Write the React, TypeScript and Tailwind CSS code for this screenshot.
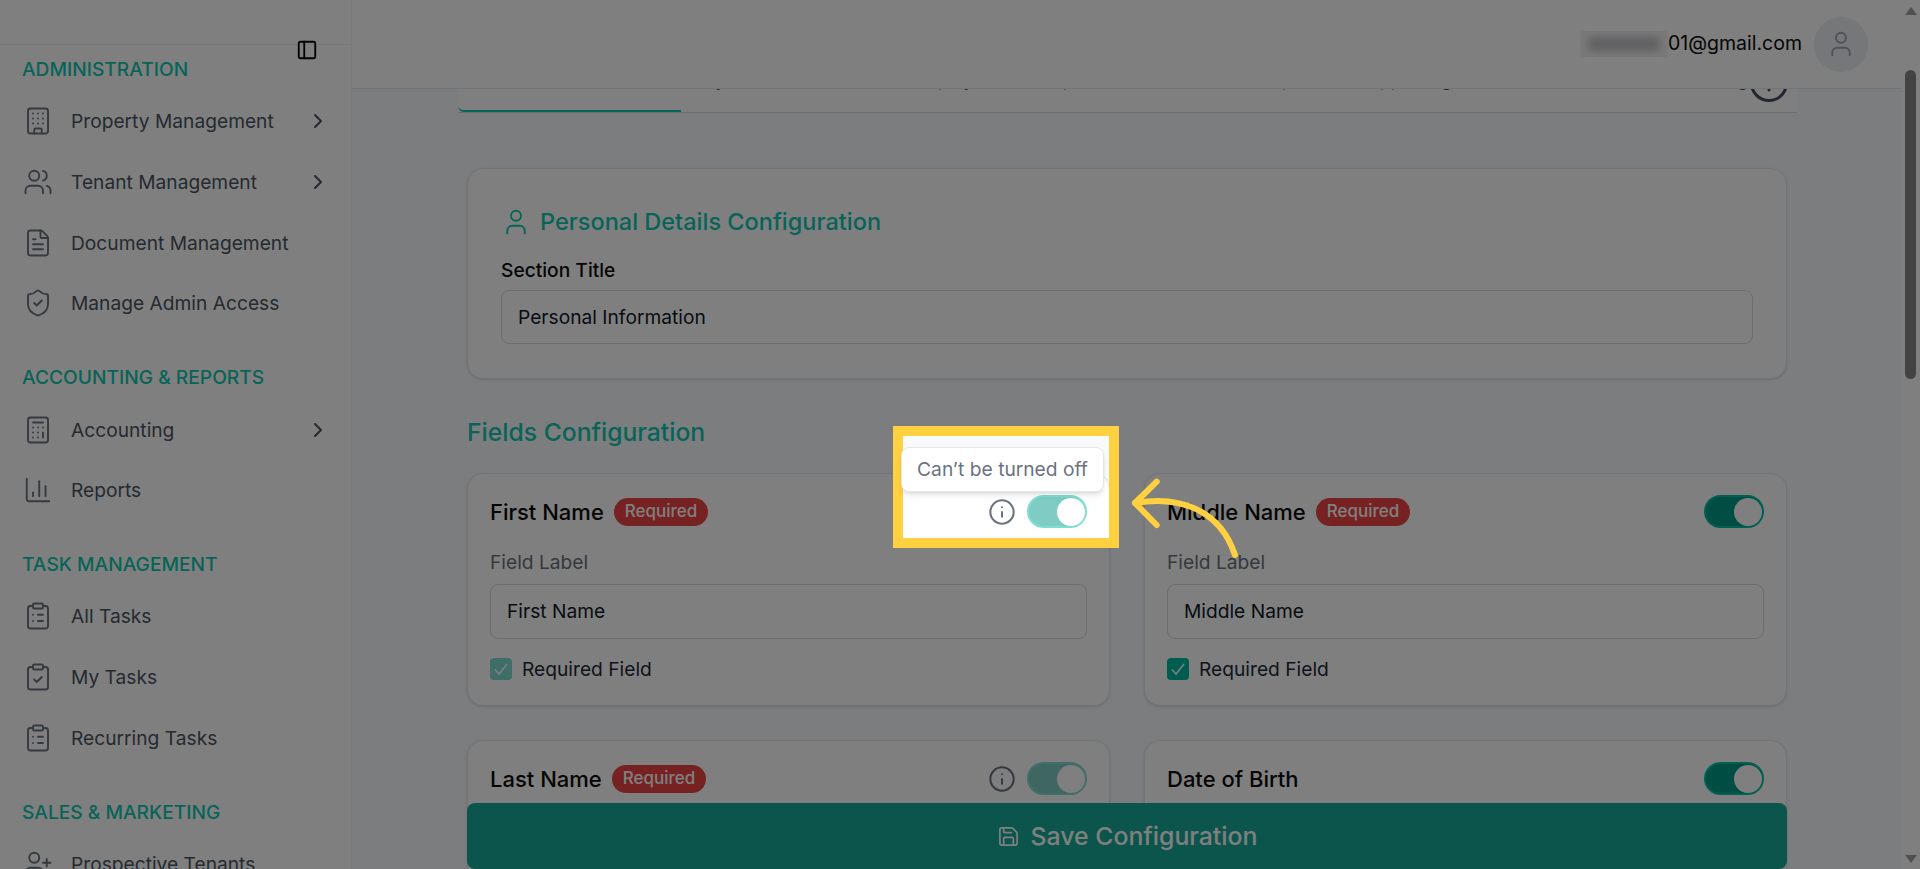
import {
  Briefcase,
  Building,
  Calculator,
  ChartColumn,
  ChevronRight,
  ClipboardCheck,
  ClipboardList,
  FileText,
  Info,
  PanelLeft,
  Save,
  ShieldCheck,
  User,
  UserPlus,
  Users,
} from 'lucide-react'

const NAV = [
  {
    title: 'Administration',
    items: [
      { label: 'Property Management', icon: Building, more: true },
      { label: 'Tenant Management', icon: Users, more: true },
      { label: 'Document Management', icon: FileText },
      { label: 'Manage Admin Access', icon: ShieldCheck },
    ],
  },
  {
    title: 'Accounting & Reports',
    items: [
      { label: 'Accounting', icon: Calculator, more: true },
      { label: 'Reports', icon: ChartColumn },
    ],
  },
  {
    title: 'Task Management',
    items: [
      { label: 'All Tasks', icon: ClipboardList },
      { label: 'My Tasks', icon: ClipboardCheck },
      { label: 'Recurring Tasks', icon: ClipboardList },
    ],
  },
  {
    title: 'Sales & Marketing',
    items: [{ label: 'Prospective Tenants', icon: UserPlus }],
  },
]

function Toggle({ locked }: { locked?: boolean }) {
  return (
    <div
      className={`flex h-[33px] w-[60px] shrink-0 items-center justify-end rounded-full border-2 border-[#00c0a4] bg-[#009a88] ${locked ? 'opacity-50' : ''}`}
    >
      <div className="h-[28px] w-[28px] rounded-full bg-white" />
    </div>
  )
}

function FieldCard({
  name,
  required,
  locked,
  tooltip,
}: {
  name: string
  required?: boolean
  locked?: boolean
  tooltip?: boolean
}) {
  return (
    <div className="rounded-2xl border border-[#e5e7eb] bg-white px-[22px] pt-[21px] pb-[25px] shadow-sm">
      <div className="flex h-[33px] items-center">
        <span className="text-[22px] leading-7 font-medium text-[#0a0a0a]">{name}</span>
        {required && (
          <span className="ml-[10px] flex h-[28px] items-center rounded-full bg-[#ef4444] px-[11px] text-[17px] font-medium text-white">
            Required
          </span>
        )}
        <div className="relative ml-auto flex items-center gap-[11px]">
          {tooltip && (
            <div className="absolute top-[-48px] left-[-87px] z-10 flex h-[45px] w-[203px] items-center justify-center rounded-lg border border-[#e5e7eb] bg-white text-[19.2px] text-[#6b7280] shadow-md">
              Can’t be turned off
            </div>
          )}
          {locked && <Info size={28} strokeWidth={1.75} className="text-[#6b7280]" />}
          <Toggle locked={locked} />
        </div>
      </div>
      <p className="mt-[22px] text-[19.2px] leading-6 text-[#6b7280]">Field Label</p>
      <div className="mt-[10px] flex h-[55px] items-center rounded-lg border border-[#d8dae6] px-4 text-[19.2px] text-[#111827]">
        {name}
      </div>
      <div className="mt-[19px] flex h-[22px] items-center gap-[10px] text-[19.2px] text-[#1f2937]">
        <span
          className={`flex h-[22px] w-[22px] items-center justify-center rounded-[4px] bg-[#00b89e] ${locked ? 'opacity-50' : ''}`}
        >
          <svg viewBox="0 0 22 22" width="22" height="22" fill="none" stroke="white" strokeWidth="1.5">
            <path d="M5 11.5l4 4.5 8-10" />
          </svg>
        </span>
        Required Field
      </div>
    </div>
  )
}

export default function App() {
  return (
    <div className="relative flex h-screen overflow-hidden bg-white font-[Inter,sans-serif]">
      <aside className="w-[352px] shrink-0 border-r border-[#f5f5f5] bg-white">
        <div className="h-[45px] border-b border-[#eceef0]" />
        <PanelLeft size={22} strokeWidth={2} className="absolute top-[39px] left-[296px] text-black" />
        <nav className="pt-[10px] pl-[23px]">
          {NAV.map(section => (
            <div key={section.title} className="mb-[29.5px]">
              <h3 className="mb-[8px] -ml-px h-7 text-[19.2px] leading-7 font-medium whitespace-nowrap text-[#10c8b0] uppercase">
                {section.title}
              </h3>
              {section.items.map(item => (
                <div key={item.label} className="flex h-[60.7px] items-center text-[#4b5563]">
                  <item.icon size={30} strokeWidth={1.5} className="shrink-0 text-[#6b7280]" />
                  <span className="ml-[18px] text-[19.2px] leading-7">{item.label}</span>
                  {item.more && <ChevronRight size={24} className="absolute left-[306px]" />}
                </div>
              ))}
            </div>
          ))}
        </nav>
      </aside>

      <main className="relative flex min-w-0 flex-1 flex-col bg-[#f8fafc]">
        <header className="flex h-[89px] shrink-0 items-center justify-end border-b border-[#e2e8f0] bg-white pr-[34px]">
          <div className="h-[26px] w-[88px] overflow-hidden bg-[#f5f5f6]">
            <div className="mx-2 my-[6px] h-[14px] bg-[#c0c0c4] blur-[4px]" />
          </div>
          <span className="text-[19.5px] text-[#0a0a0a]">01@gmail.com</span>
          <div className="ml-[12px] flex h-[55px] w-[54px] items-center justify-center rounded-full bg-[#eceef2]">
            <User size={30} strokeWidth={1.5} className="text-[#9ca3af]" />
          </div>
        </header>

        <div className="flex-1 overflow-hidden px-[115px]">
          {/* tab bar, page is scrolled so only the bottom of it shows */}
          <div className="-mr-[10px] -ml-[9px] flex h-[24px] border-b border-[#d8dce2] bg-white text-[18px] leading-7 whitespace-nowrap text-[#4b5563]">
            <div className="h-[23px] w-[223px] rounded-bl-md border-b-2 border-[#10c8b0] text-center">
              <span className="-mt-[23px] block text-[#10c8b0]">Personal Details</span>
            </div>
            <div className="w-[199px] pl-[13px]">
              <span className="-mt-[23px] block">Key Contacts</span>
            </div>
            <div className="flex w-[494px]">
              <Briefcase size={22} className="-mt-[21px] mr-[9px] shrink-0" />
              <span className="-mt-[23px] block">Employment Group</span>
              <span className="-mt-[23px] ml-[186px] block">Reports</span>
              <span className="-mt-[23px] ml-[32px] block">Supporting</span>
            </div>
            <div className="flex flex-1 pl-[260px]">
              <FileText size={22} className="-mt-[21px] shrink-0" />
              <span className="-mt-[23px] ml-[60px] block">Log</span>
              <Info size={42} strokeWidth={1.7} className="-mt-[27px] shrink-0 text-[#464c60]" />
            </div>
          </div>

          <section className="mt-[55px] rounded-2xl border border-[#e5e7eb] bg-white px-[33px] pt-[37px] pb-[34px] shadow-sm">
            <div className="flex h-8 items-center gap-[9px]">
              <User size={30} strokeWidth={1.5} className="text-[#10c8b0]" />
              <h2 className="text-[23.5px] font-medium text-[#10c8b0]">Personal Details Configuration</h2>
            </div>
            <label className="mt-[18px] block text-[19.2px] leading-7 font-medium text-[#0a0a0a]">Section Title</label>
            <div className="mt-[6px] flex h-[54px] items-center rounded-lg border border-[#d8dae6] px-4 text-[19.2px] text-[#111827]">
              Personal Information
            </div>
          </section>

          <h2 className="mt-[37px] text-[24.7px] leading-8 font-medium text-[#10c8b0]">Fields Configuration</h2>

          <div className="mt-[25px] grid grid-cols-2 gap-[34px]">
            <FieldCard name="First Name" required locked tooltip />
            <FieldCard name="Middle Name" required />
            <FieldCard name="Last Name" required locked />
            <FieldCard name="Date of Birth" />
          </div>
        </div>

        <button className="absolute right-[115px] bottom-0 left-[115px] flex h-[66px] items-center justify-center gap-[11px] rounded-lg bg-[#16ab99] pt-[1px] text-[24.8px] font-medium text-white">
          <Save size={23} strokeWidth={1.75} />
          Save Configuration
        </button>
      </main>

      {/* browser scrollbar */}
      <div className="flex w-[18px] shrink-0 flex-col bg-white pt-[7px] pb-[6px] pl-[3px]">
        <svg viewBox="0 0 12 8" width="12" height="8" fill="#a0a0a0">
          <path d="M6 0l6 8H0z" />
        </svg>
        <div className="mt-[55px] h-[309px] w-[11px] rounded-full bg-[#868686]" />
        <svg viewBox="0 0 12 8" width="12" height="8" fill="#a0a0a0" className="mt-auto">
          <path d="M6 8l6-8H0z" />
        </svg>
      </div>

      {/* walkthrough highlight: dims everything but the hole */}
      <div className="absolute top-[426px] left-[893px] h-[122px] w-[226px] border-[10px] border-[#ffd140] shadow-[0_0_0_3000px_rgba(0,0,0,0.5)]" />
      <svg
        viewBox="0 0 120 95"
        width="120"
        height="95"
        fill="none"
        stroke="#ffd140"
        strokeWidth="6"
        strokeLinecap="round"
        strokeLinejoin="round"
        className="absolute top-[470px] left-[1125px]"
      >
        <path d="M31.7 11.7L10 33l21.7 22" />
        <path d="M10 33c45-8 85 7 100 52" />
      </svg>
    </div>
  )
}
